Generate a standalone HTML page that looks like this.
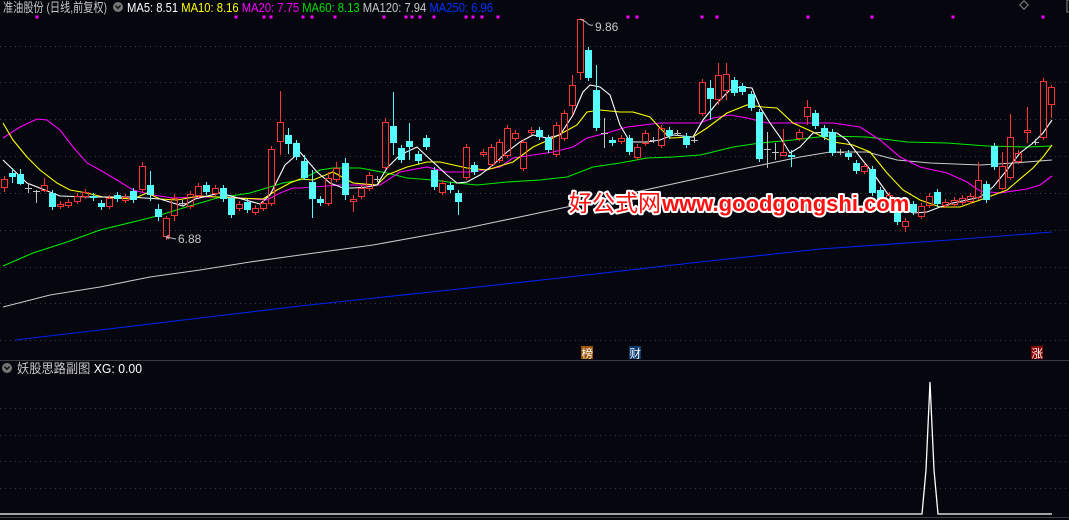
<!DOCTYPE html>
<html><head><meta charset="utf-8"><style>
html,body{margin:0;padding:0;background:#05060e;width:1069px;height:520px;overflow:hidden}
svg{display:block}
text{font-family:"Liberation Sans","Noto Sans CJK SC",sans-serif}
</style></head><body>
<svg id="s" width="1069" height="520" xmlns="http://www.w3.org/2000/svg">
<rect width="1069" height="520" fill="#05060e"/>
<g id="grid" stroke="#3a3e48" stroke-width="1" stroke-dasharray="1,4"></g>
<line x1="0" y1="360.5" x2="1069" y2="360.5" stroke="#3c3c44"/>
<line x1="0" y1="517.5" x2="1069" y2="517.5" stroke="#3c3c44"/>
<g id="mas" fill="none" stroke-width="1.1"></g>
<g id="candles"></g>
<g id="dots" fill="#ff00ff"></g>
<text x="3" y="12" font-size="13" fill="#c8c8c8" textLength="104" lengthAdjust="spacingAndGlyphs">准油股份 (日线,前复权)</text>
<circle cx="118" cy="7" r="5" fill="#777"/><path d="M115.5 5.5 L118 8.3 L120.5 5.5" stroke="#111" stroke-width="1.5" fill="none"/>
<text x="127" y="12" font-size="13" textLength="366" lengthAdjust="spacingAndGlyphs"><tspan fill="#ffffff">MA5: 8.51 </tspan><tspan fill="#ffff00">MA10: 8.16 </tspan><tspan fill="#ff00ff">MA20: 7.75 </tspan><tspan fill="#00e000">MA60: 8.13 </tspan><tspan fill="#c8c8c8">MA120: 7.94 </tspan><tspan fill="#0033ff">MA250: 6.96</tspan></text>
<rect x="1021" y="2" width="6" height="6" transform="rotate(45 1024 5)" fill="none" stroke="#888"/>
<rect x="1067" y="0" width="4" height="12" fill="none" stroke="#888"/>
<path d="M580 19 L586 22 Q589 26 593 25" stroke="#bbb" fill="none"/>
<text x="595" y="31" font-size="12" fill="#c8c8c8">9.86</text>
<path d="M166 237 L176 239" stroke="#bbb" fill="none"/><path d="M166 237 l3 -2 M166 237 l3 2" stroke="#bbb"/>
<text x="178" y="243" font-size="12" fill="#c8c8c8">6.88</text>
<rect x="581" y="346" width="12" height="13" fill="#9a5200"/><text x="581.5" y="357.5" font-size="11.5" fill="#fff">榜</text>
<rect x="629" y="346" width="12" height="13" fill="#0c3a70"/><text x="629.5" y="357.5" font-size="11.5" fill="#fff">财</text>
<rect x="1031" y="346" width="12" height="13" fill="#8a0000"/><text x="1031.5" y="357.5" font-size="11.5" fill="#fff">涨</text>
<circle cx="7" cy="368" r="5" fill="#777"/><path d="M4.5 366.5 L7 369.3 L9.5 366.5" stroke="#111" stroke-width="1.5" fill="none"/>
<text x="17" y="373" font-size="13" fill="#c8c8c8" textLength="125" lengthAdjust="spacingAndGlyphs">妖股思路副图 <tspan fill="#fff">XG: 0.00</tspan></text>
<polyline points="0,514 922,514 926,470 930,382 934,470 938,514 1052,514" fill="none" stroke="#fff" stroke-width="1.3"/>
<g font-size="22" font-weight="bold" fill="#ff1010" stroke="#ffffff" stroke-width="4" stroke-linejoin="round" paint-order="stroke">
<text x="569" y="211" font-weight="normal" font-size="23" font-family="'Noto Serif CJK SC','Liberation Serif',serif">好公式网</text>
<text x="662" y="211">www.goodgongshi.com</text>
</g>
</svg>
<script>
var NS="http://www.w3.org/2000/svg";
function el(p,t,a){var e=document.createElementNS(NS,t);for(var k in a)e.setAttribute(k,a[k]);p.appendChild(e);return e;}
var g=document.getElementById('grid');
[46,82,119,156,193,230,267,303,340,408,435,461,488].forEach(function(y){el(g,'line',{x1:0,x2:1069,y1:y+.5,y2:y+.5});});
var D="r179-187/176-192,c173-177/168-183,c174-184/169-185,w188/183-193,w191/190-203,r185-190/178-192,c193-207,r204-206,r202-205,r196-201,r192-196,c196-198,c203-207,r198-206,c195-199,r197-200,c191-200,r166-189/162-192,c185-195/171-201,c209-217/204-221,r218-236/216-240,r198-215/194-221,w203,r194-206,r186-195,c185-192,r188-193,c188-199,c198-215,r204-208,c202-210,r208-212,r203-208,r149-203,r122-141/91-155,c135-144/128-154,c143-157,c161-178/155-180,c182-199/170-218,c199-203,r178-203/172-206,r168-179/162-182,c163-195/158-200,r199-201/195-212,r188-196,r175-188,w179,r122-167/118-170,c126-143/92-155,c148-160,c141-147/123-160,c154-161,c138-147,c170-187,r183-192,c185-190,c193-202/190-215,r147-177,c165-172,r152-154,r147-164,r142-160,r128-155,r133-138,r142-168,r130-132,c130-137,c138-150,r125-154,r113-138,r85-105/75-115,r19-72/19-80,c50-78,c90-128/65-131,w133/118-148,c140-143,r138-141,c138-152,r147-157,r133-143,w140,r128-145,c130-136,w133,c136-145,w140,r82-113,c88-99/80-120,r75-99/63-105,r74-90/63-100,c80-93,c86-92,c94-108,c112-159,w149/132-168,w152/143-160,r152-155/129-156,c155-157/150-167,r132-138,r107-116/100-125,c113-126,c128-137,c132-153,w152,c153-157,c163-171,r166-171,c169-193,c190-200,r195-205,c211-222,r221-226/218-232,c204-212,r206-216,r196-205,c192-204,r202-205,r200-204,r198-202,r196-201,r180-197/162-200,c184-200,c146-167,r166-188/152-190,r137-177/114-180,r153-161,r130-132/107-143,w142,r81-137,r87-104/85-118".split(',');
var cg=document.getElementById('candles');
D.forEach(function(s,i){
 var x=Math.round(3.5+8.12*i),t=s[0],p=s.slice(1).split('/'),b=p[0].split('-').map(Number);
 var top=b[0],bot=b.length>1?b[1]:b[0];var w=p[1]?p[1].split('-').map(Number):[top-3,bot+3];
 var col=t=='r'?'#ff3434':(t=='c'?'#54fcfc':'#c0c0c0');
 if(t=='w'){el(cg,'line',{x1:x+.5,x2:x+.5,y1:w[0],y2:w[1],stroke:col});el(cg,'line',{x1:x-3,x2:x+4,y1:top+.5,y2:top+.5,stroke:col});return;}
 if(t=='r'){el(cg,'line',{x1:x+.5,x2:x+.5,y1:w[0],y2:top,stroke:col});el(cg,'line',{x1:x+.5,x2:x+.5,y1:bot,y2:w[1],stroke:col});el(cg,'rect',{x:x-2.5,y:top+.5,width:6,height:Math.max(bot-top,1),fill:'none',stroke:col});}
 else{el(cg,'line',{x1:x+.5,x2:x+.5,y1:w[0],y2:w[1],stroke:col});el(cg,'rect',{x:x-3,y:top,width:7,height:Math.max(bot-top,2),fill:col});}
});
var mg=document.getElementById('mas');
var M=[
["#0022ee","15,340 100,330 200,318 300,306 450,290 560,278 700,262 820,249 950,240 1052,232"],
["#c8c8c8","3,307 50,295 100,287 150,277 200,270 250,262 300,255 373,245 467,228 567,207 700,178 747,168 800,157 830,152 867,152 897,160 930,163 980,165 1013,163 1052,160"],
["#00ee00","3,266 33,253 67,242 100,230 133,222 157,216 183,208 217,198 250,193 283,183 300,180 320,170 333,168 360,168 387,173 407,178 433,180 457,183 477,185 507,182 540,180 567,177 593,167 620,163 647,158 673,157 700,155 713,152 733,147 760,143 793,140 827,136 867,137 907,142 947,143 987,146 1027,147 1052,146"],
["#ff00ff","3,138 20,127 37,119 47,120 60,130 73,147 87,163 100,170 117,180 133,190 153,195 173,198 200,197 227,197 267,200 280,193 293,188 300,188 340,185 380,185 400,172 427,167 447,172 473,172 500,167 513,158 533,155 553,152 573,147 587,138 607,133 627,127 660,123 700,123 713,118 730,115 747,118 767,123 787,123 807,123 833,123 860,127 880,140 900,157 920,167 947,173 967,182 980,191 1000,193 1027,189 1040,185 1052,176"],
["#ffff00","3,123 13,140 27,157 40,170 57,183 70,190 87,193 103,197 133,199 147,193 160,199 177,200 200,196 217,197 233,198 263,199 277,190 290,183 300,179 313,180 333,172 353,183 377,185 387,175 407,167 427,162 440,162 467,168 487,170 513,162 533,147 553,138 577,125 587,112 600,110 620,112 633,112 650,117 660,128 670,138 693,137 707,128 727,113 747,105 763,107 777,108 793,123 813,132 833,142 853,145 870,152 887,173 903,190 920,200 940,207 960,207 980,200 1007,190 1033,168 1043,157 1052,145"],
["#ffffff","3,160 27,183 60,196 90,197 130,197 160,199 183,206 195,199 220,193 260,204 270,195 285,165 300,152 317,172 330,183 343,188 353,188 367,187 377,185 387,168 400,155 417,147 433,162 447,175 457,183 467,182 480,175 493,165 507,152 520,142 533,135 547,138 560,135 573,115 583,92 590,85 600,87 610,95 620,125 630,142 647,142 660,140 673,135 693,137 703,120 717,103 730,90 740,87 752,88 760,107 770,123 780,137 790,153 800,147 813,133 827,132 837,133 847,140 860,157 873,173 887,193 900,207 913,213 927,212 940,207 953,203 967,200 980,197 993,187 1007,170 1020,153 1033,143 1043,133 1052,120"]];
M.forEach(function(m){el(mg,'polyline',{points:m[1],stroke:m[0]});});
var dg=document.getElementById('dots');
[37,236,264,271,303,312,335,384,406,412,420,434,466,473,482,498,628,637,702,717,808,872,953,1043].forEach(function(x){el(dg,'rect',{x:x-1.5,y:15.5,width:3,height:3});});
</script>
</body></html>
